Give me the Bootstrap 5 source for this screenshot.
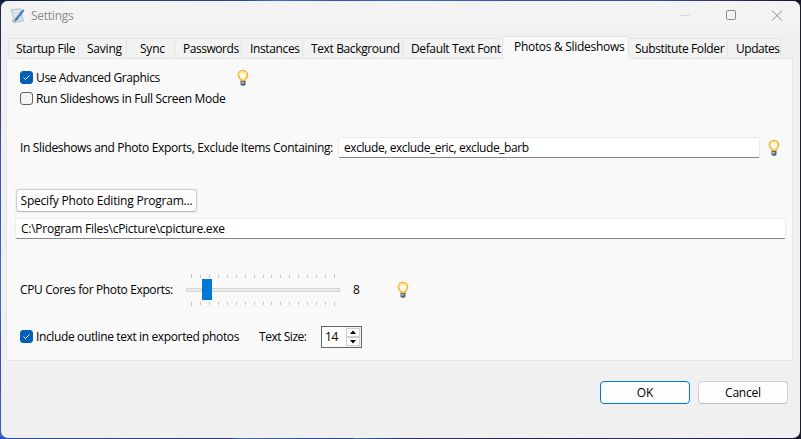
<!DOCTYPE html>
<html lang="en">
<head>
<meta charset="utf-8">
<title>Settings</title>
<link href="https://cdn.jsdelivr.net/npm/bootstrap@5.3.0/dist/css/bootstrap.min.css" rel="stylesheet">
<style>
body{width:801px;height:439px;overflow:hidden;padding:1px;font:12px/16px "Open Sans","Noto Sans",sans-serif;color:#000;letter-spacing:-.37px;
 background:linear-gradient(90deg,#0b1c3c 0,#2c3c68 90px,#27468f 240px,#3d6fc0 275px,#3a4fb4 340px,#3f6cb8 410px,#3c49ae 520px,#3a4fb0 650px,#35275c 740px,#10182c 800px) 0 0/801px 2px no-repeat,
 linear-gradient(90deg,#2a50c4 0,#3c4a90 60px,#303274 230px,#3f6cab 240px,#3b49a8 300px,#333c93 350px,#3f6cab 355px,#2c2a66 400px,#272650 480px,#24203a 560px,#2c2c60 640px,#14162c 800px) 0 100%/801px 2px no-repeat,
 linear-gradient(#16264a 0,#33406a 110px,#3c50b4 150px,#4068bc 300px,#3c4cae 350px,#3f60b8 439px) 0 0/8px 439px no-repeat,#1b1e2b}
.win{width:799px;height:437px;background:#f0f0f0;border-radius:7px;overflow:hidden}
.titlebar{height:30px;background:#f3f3f3;color:#8b8b8b;padding-left:9px;letter-spacing:-.25px}
.caption{margin-left:5px}
.sys{margin-left:auto}
.sys svg{display:block;width:46px;height:30px}
.tabs{height:23px;margin:5px 0 -1px 7px;position:relative}
.tabs .nav-link{height:21px;padding:2px 0 0 8px;border:1px solid #e5e5e5;border-left-width:0;border-radius:0;background:#f2f2f2;color:#000;white-space:nowrap;line-height:16px}
.tabs .nav-link:first-child{border-left-width:1px;padding-left:7px}
.tabs .nav-link.active{height:23px;background:#f9f9f9;border:1px solid #e5e5e5;border-bottom-color:#f9f9f9;padding:2px 0 0 11px;margin-left:-1px;letter-spacing:-.3px}
.pane{width:787px;height:303px;margin-left:5px;border:1px solid #e5e5e5;background:#f9f9f9;white-space:nowrap}
.line{height:22px}
.loose{letter-spacing:-.31px}
.looser{letter-spacing:-.22px}
.tight{letter-spacing:-.46px}
.check{width:13px;height:13px;border:1px solid #626262;border-radius:3px;background:#f5f5f5;margin:0 3px 1px 13px}
.check.on{background:#005fb8;border-color:#005fb8}
.check svg{display:block;width:11px;height:11px}
.bulb{width:12px;height:18px;flex:none}
.field{height:21px;background:#fff;border:1px solid #ececec;border-bottom-color:#868686;border-radius:2px;padding:2px 5px;line-height:16px}
.push{height:23px;padding:0;border:1px solid #d0d0d0;border-bottom-color:#bcbcbc;border-radius:4px;background:#fdfdfd;font-size:12px;line-height:21px;color:#000;letter-spacing:-.2px}
.push.main{border-color:#0078d4}
.halo{background:#f0f0f0;padding:1px}
.slider{width:154px;height:33px;flex:none}
.spin{width:41px;height:22px;border:1px solid #646464;background:#fff;padding-left:3px}
.spin svg{width:15px;height:20px;margin-left:auto}
</style>
</head>
<body>
<svg width="0" height="0" class="position-absolute"><symbol id="bulb" viewBox="0 0 12 18">
 <path d="M3.900 11.500C3.600 9.700 1.300 8.500 1.300 6a4.700 4.700 0 0 1 9.400 0c0 2.500-2.300 3.700-2.600 5.500z" fill="#fde6a0" stroke="#eeb331" stroke-width="1.300"/>
 <circle cx="6" cy="6.800" r="2.700" fill="#fffdf2"/>
 <path d="M3.500 12h5v3.300L7.500 16.700h-3l-1-1.400z" fill="#53697e"/><path d="M4.500 13h2v1.500h-2z" fill="#c9dbe4"/>
</symbol></svg>
<main class="win d-flex flex-column">
 <header class="titlebar d-flex align-items-center flex-shrink-0">
  <svg width="16" height="16" viewBox="0 0 16 16"><path d="M1 1.500L10.500.8 13.500 13 4.500 14.500z" fill="#cfdde6" stroke="#a9b8c2" stroke-width=".7"/><path d="M3.500 4l7-1M4 7l6-1M5 10l5-1" stroke="#eef6fa" stroke-width="1.200"/><path d="M1 11.500l3 3.500h2L5 12z" fill="#aab6be"/><path d="M6 11.500L13.500 2" stroke="#3470a8" stroke-width="2.200"/><path d="M6.500 10.500L13 2" stroke="#83b4dc" stroke-width=".6"/><path d="M5 13l.5-2.500L7.200 12z" fill="#3b4650"/></svg>
  <span class="caption">Settings</span>
  <div class="sys d-flex">
   <svg viewBox="0 0 46 30"><path d="M18 14.500h10" stroke="#d8d8d8"/></svg>
   <svg viewBox="0 0 46 30"><rect x="18.500" y="9.500" width="9" height="9" rx="1" fill="none" stroke="#8b8b8b"/></svg>
   <svg viewBox="0 0 46 30"><path d="M18 9.500l10 10M28 9.500l-10 10" stroke="#8b8b8b"/></svg>
  </div>
 </header>
 <nav class="tabs nav flex-nowrap align-items-end flex-shrink-0">
  <a class="nav-link" style="width:71px">Startup File</a>
  <a class="nav-link looser" style="width:48px">Saving</a>
  <a class="nav-link looser" style="width:48px;padding-left:13px">Sync</a>
  <a class="nav-link tight" style="width:67px">Passwords</a>
  <a class="nav-link" style="width:61px">Instances</a>
  <a class="nav-link" style="width:100px">Text Background</a>
  <a class="nav-link" style="width:100px">Default Text Font</a>
  <a class="nav-link active" style="width:127px">Photos &amp; Slideshows</a>
  <a class="nav-link" style="width:99px;padding-left:6px">Substitute Folder</a>
  <a class="nav-link tight" style="width:53px">Updates</a>
 </nav>
 <section class="pane flex-shrink-0">
  <div class="line d-flex align-items-center" style="margin-top:8px"><span class="check on"><svg viewBox="0 0 11 11"><path d="M2.500 5.500l2 2 4-4" fill="none" stroke="#fff"/></svg></span><span style="width:201px">Use Advanced Graphics</span><svg class="bulb"><use href="#bulb"/></svg></div>
  <div class="line d-flex align-items-center" style="margin-top:-1px"><span class="check"></span><span class="loose">Run Slideshows in Full Screen Mode</span></div>
  <div class="d-flex align-items-center" style="margin-top:27px"><span style="width:331px;padding-left:13px;letter-spacing:-.34px">In Slideshows and Photo Exports, Exclude Items Containing:</span><div class="field" style="width:422px;letter-spacing:-.42px">exclude, exclude_eric, exclude_barb</div><svg class="bulb" style="margin-left:8px"><use href="#bulb"/></svg></div>
  <div class="d-flex" style="margin:30px 0 0 8px"><div class="halo"><button class="btn push d-block" style="width:181px">Specify Photo Editing Program...</button></div></div>
  <div class="field" style="width:771px;margin:5px 0 0 8px;letter-spacing:-.25px">C:\Program Files\cPicture\cpicture.exe</div>
  <div class="d-flex align-items-center" style="margin-top:34px"><span style="width:179px;padding-left:13px">CPU Cores for Photo Exports:</span>
   <svg class="slider" id="cores" viewBox="0 -1 154 33"><rect x=".5" y="14.500" width="153" height="3" fill="#e7eaea" stroke="#d6d6d6"/><rect x="16" y="5" width="10" height="21" fill="#0078d7"/></svg>
   <span style="width:57px;padding-left:13px">8</span><svg class="bulb"><use href="#bulb"/></svg></div>
  <div class="d-flex align-items-center" style="margin-top:20px"><span class="check on"><svg viewBox="0 0 11 11"><path d="M2.500 5.500l2 2 4-4" fill="none" stroke="#fff"/></svg></span><span style="width:223px">Include outline text in exported photos</span><span class="tight" style="width:62px">Text Size:</span>
   <div class="spin d-flex align-items-center"><span>14</span><svg viewBox="0 0 15 20"><rect width="15" height="20" fill="#f0f0f0"/><rect x=".5" y="1.500" width="13" height="8" fill="#fdfdfd" stroke="#d0d0d0"/><rect x=".5" y="10.500" width="13" height="8" fill="#fdfdfd" stroke="#d0d0d0"/><path d="M4 7h6L7 3.500zM4 13h6l-3 3.500z"/></svg></div></div>
 </section>
 <footer class="d-flex justify-content-end gap-2" style="margin:20px 12px 0 0"><button class="btn push main" style="width:90px">OK</button><button class="btn push" style="width:90px">Cancel</button></footer>
</main>
<script src="https://cdn.jsdelivr.net/npm/bootstrap@5.3.0/dist/js/bootstrap.bundle.min.js"></script>
<script>
// Tick marks above and below the slider track.
const track = document.getElementById('cores');
for (let i = 0; i < 17; i++) {
  const end = i === 0 || i === 16, x = Math.round(5 + i * 8.94) + .5;
  const p = document.createElementNS('http://www.w3.org/2000/svg', 'path');
  p.setAttribute('d', `M${x} ${end ? 0 : 1}V4M${x} 28V${end ? 32 : 31}`);
  p.setAttribute('stroke', '#c4c4c4');
  track.append(p);
}
</script>
</body>
</html>
